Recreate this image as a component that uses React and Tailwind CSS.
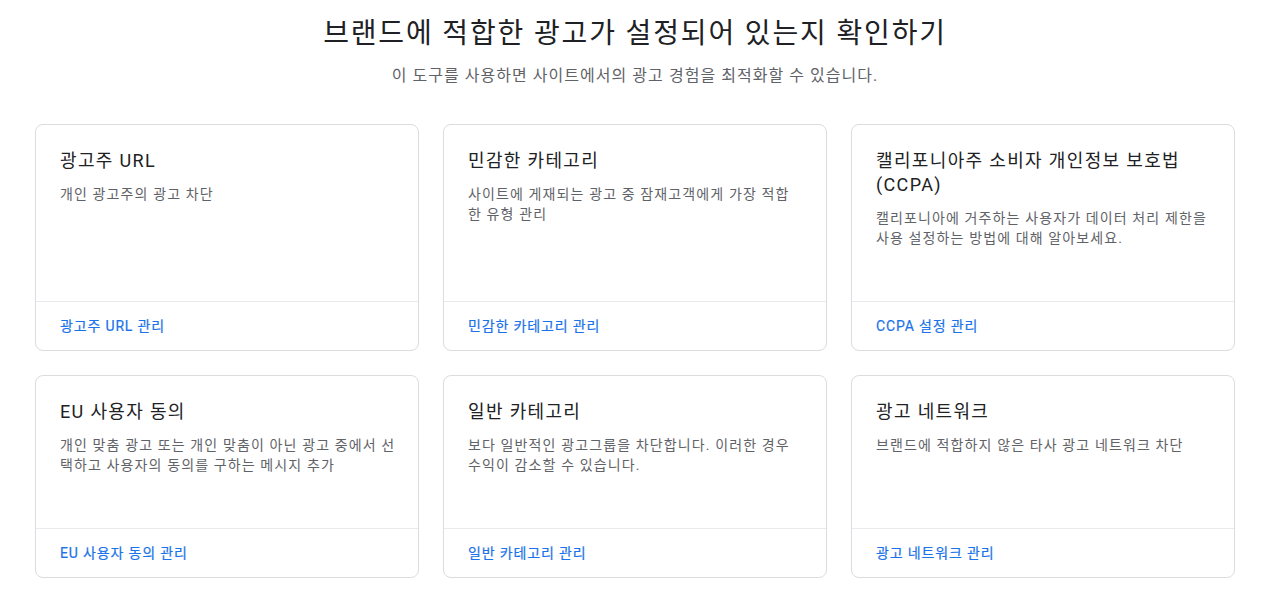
import React from "react";

const cards = [
  { title: ["광고주 URL"], desc: ["개인 광고주의 광고 차단"], link: "광고주 URL 관리" },
  { title: ["민감한 카테고리"], desc: ["사이트에 게재되는 광고 중 잠재고객에게 가장 적합", "한 유형 관리"], link: "민감한 카테고리 관리" },
  { title: ["캘리포니아주 소비자 개인정보 보호법", "(CCPA)"], desc: ["캘리포니아에 거주하는 사용자가 데이터 처리 제한을", "사용 설정하는 방법에 대해 알아보세요."], link: "CCPA 설정 관리" },
  { title: ["EU 사용자 동의"], desc: ["개인 맞춤 광고 또는 개인 맞춤이 아닌 광고 중에서 선", "택하고 사용자의 동의를 구하는 메시지 추가"], link: "EU 사용자 동의 관리" },
  { title: ["일반 카테고리"], desc: ["보다 일반적인 광고그룹을 차단합니다. 이러한 경우", "수익이 감소할 수 있습니다."], link: "일반 카테고리 관리" },
  { title: ["광고 네트워크"], desc: ["브랜드에 적합하지 않은 타사 광고 네트워크 차단"], link: "광고 네트워크 관리" },
];

export default function App() {
  return (
    <div
      className="min-h-[596px] bg-white pl-[35px] pr-[29px]"
      style={{ fontFamily: 'Roboto, "Noto Sans CJK KR", sans-serif' }}
    >
      <div className="flex flex-col items-center pt-[15px]">
        <h1 className="text-[28px] leading-[38px] text-[#202124] font-normal tracking-[0.066em]">
          브랜드에 적합한 광고가 설정되어 있는지 확인하기
        </h1>
        <p className="mt-[12px] text-[16px] leading-[22px] text-[#5f6368] tracking-[0.065em]">
          이 도구를 사용하면 사이트에서의 광고 경험을 최적화할 수 있습니다.
        </p>
      </div>
      <div className="grid grid-cols-3 gap-6 mt-[37px] pb-[18px]">
        {cards.map((c) => (
          <div
            key={c.link}
            className="flex flex-col rounded-[8px] border border-[#dadce0] bg-white"
          >
            <div className="flex-1 px-6 pt-6 pb-[53px]">
              <div className="text-[18px] leading-[24px] text-[#202124] tracking-[0.075em]">
                {c.title.map((t) => (
                  <span key={t} className="block whitespace-nowrap">{t}</span>
                ))}
              </div>
              <div className="mt-[11px] text-[14px] leading-[20px] text-[#5f6368] tracking-[0.08em]">
                {c.desc.map((t) => (
                  <span key={t} className="block whitespace-nowrap">{t}</span>
                ))}
              </div>
            </div>
            <div className="border-t border-[#e8eaed] h-[49px] flex items-center px-6">
              <span className="text-[14px] font-normal text-[#1a73e8] tracking-[0.06em] [-webkit-text-stroke:0.2px_#1a73e8]">{c.link}</span>
            </div>
          </div>
        ))}
      </div>
    </div>
  );
}
